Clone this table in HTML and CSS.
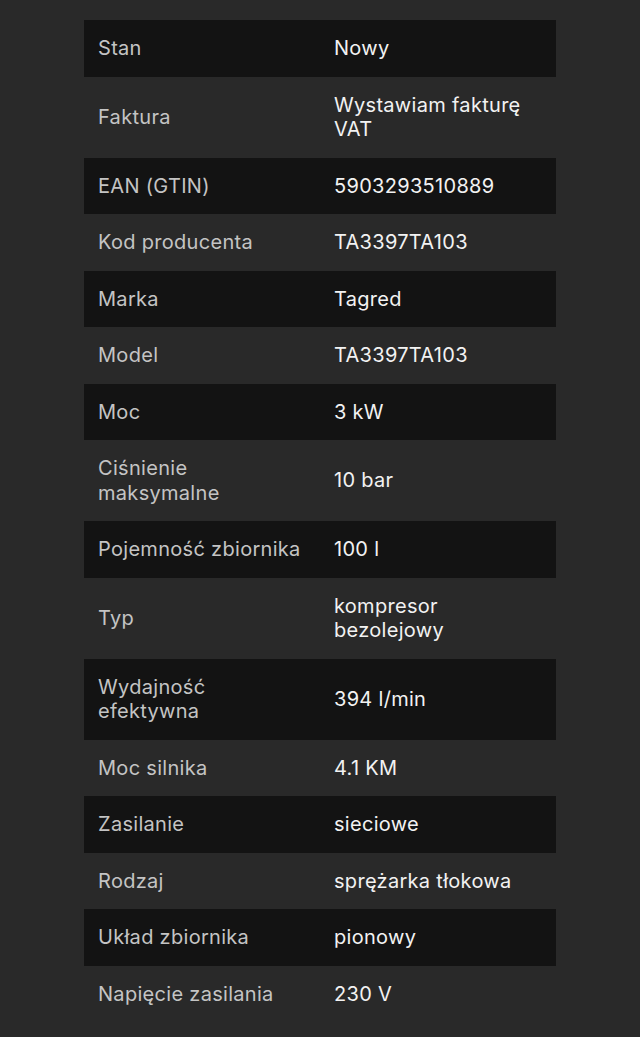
FILE: index.html
```html
<!DOCTYPE html>
<html lang="pl">
<head>
<meta charset="utf-8">
<link rel="stylesheet" href="styles.css">
</head>
<body>
<div class="page">
  <table class="params">
    <tbody>
      <tr><td class="label">Stan</td><td class="value">Nowy</td></tr>
      <tr><td class="label">Faktura</td><td class="value">Wystawiam fakturę VAT</td></tr>
      <tr><td class="label">EAN (GTIN)</td><td class="value">5903293510889</td></tr>
      <tr><td class="label">Kod producenta</td><td class="value">TA3397TA103</td></tr>
      <tr><td class="label">Marka</td><td class="value">Tagred</td></tr>
      <tr><td class="label">Model</td><td class="value">TA3397TA103</td></tr>
      <tr><td class="label">Moc</td><td class="value">3 kW</td></tr>
      <tr><td class="label">Ciśnienie maksymalne</td><td class="value">10 bar</td></tr>
      <tr><td class="label">Pojemność zbiornika</td><td class="value">100 l</td></tr>
      <tr><td class="label">Typ</td><td class="value">kompresor bezolejowy</td></tr>
      <tr><td class="label">Wydajność efektywna</td><td class="value">394 l/min</td></tr>
      <tr><td class="label">Moc silnika</td><td class="value">4.1 KM</td></tr>
      <tr><td class="label">Zasilanie</td><td class="value">sieciowe</td></tr>
      <tr><td class="label">Rodzaj</td><td class="value">sprężarka tłokowa</td></tr>
      <tr><td class="label">Układ zbiornika</td><td class="value">pionowy</td></tr>
      <tr><td class="label">Napięcie zasilania</td><td class="value">230 V</td></tr>
    </tbody>
  </table>
</div>
</body>
</html>
```
FILE: styles.css
```css
html, body {
  margin: 0;
  padding: 0;
  background: #292929;
}
body {
  font-family: Inter, "Noto Sans", sans-serif;
  font-size: 20px;
  line-height: 24.5px;
  letter-spacing: 0.3px;
}
.page {
  padding: 20px 84px 0 84px;
}
.params {
  width: 472px;
  border-collapse: collapse;
  table-layout: fixed;
}
.params tr:nth-child(odd) {
  background: #131313;
}
.params td {
  padding: 16px 14px;
  vertical-align: middle;
  width: 50%;
}
.label {
  color: #c4c4c4;
}
.value {
  color: #f2f2f2;
}
```
